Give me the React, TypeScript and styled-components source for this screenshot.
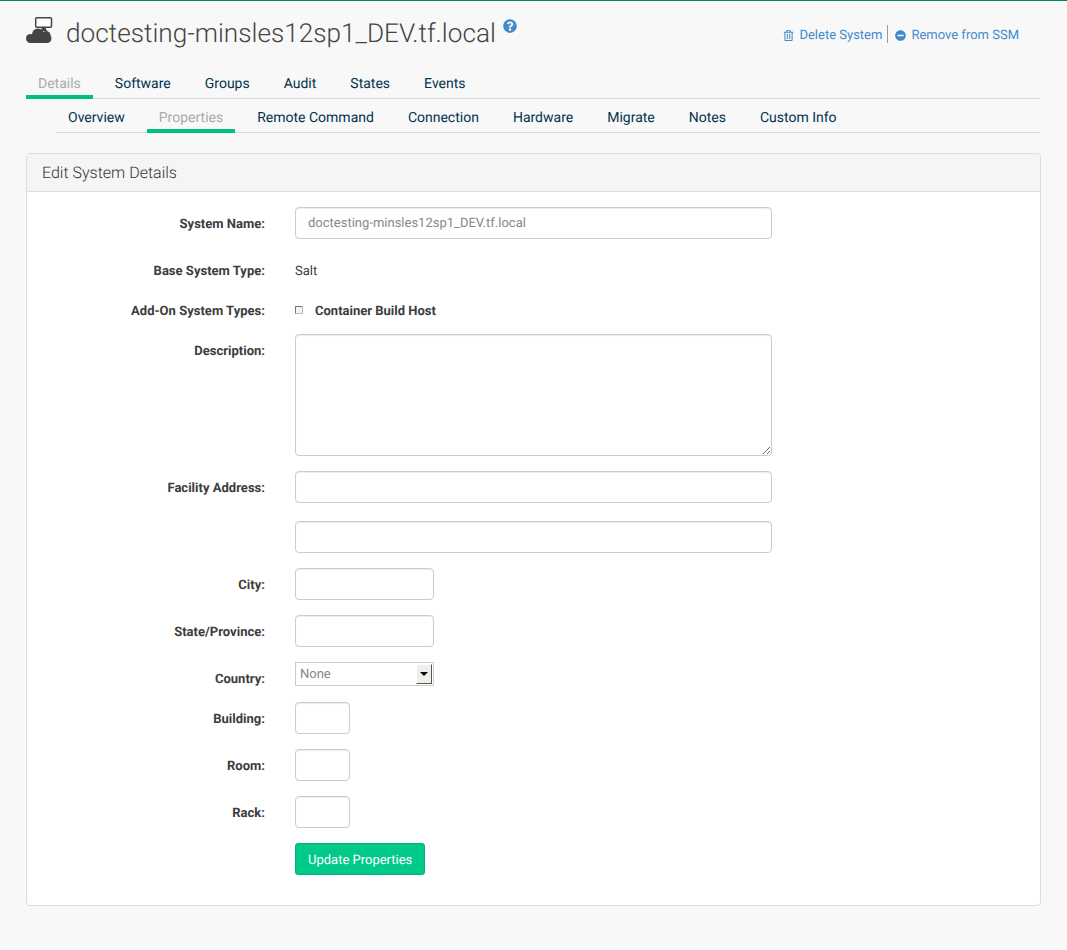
import React from "react";
import styled, { createGlobalStyle } from "styled-components";
import { FaMinusCircle, FaQuestionCircle, FaRegTrashAlt } from "react-icons/fa";

const Global = createGlobalStyle`
  html, body { margin: 0; padding: 0; background: #f8f8f8; }
  body { font-family: Roboto, "Liberation Sans", sans-serif; font-size: 13px; color: #333; text-rendering: geometricPrecision; }
  * { box-sizing: border-box; }
`;

const Page = styled.div`
  border-top: 1px solid #00875f;
  padding: 0 26px 43px;
  min-height: 950px;
`;

const Header = styled.header`
  display: flex;
  justify-content: space-between;
  align-items: flex-start;
  height: 64px;
  padding-top: 16px;
`;

const TitleGroup = styled.div`
  display: flex;
  align-items: flex-start;
`;

const Title = styled.h1`
  margin: 1px 0 0 12px;
  font-size: 26.2px;
  font-weight: 300;
  line-height: 32px;
  color: #444;
`;

const Help = styled.a`
  margin: 2px 0 0 7px;
  font-size: 14px;
  line-height: 14px;
  color: #428bca;
`;

const Actions = styled.div`
  display: flex;
  align-items: center;
  margin: 8px 22px 0 0;
  font-size: 13px;
  color: #428bca;
`;

const Action = styled.a`
  display: flex;
  align-items: center;
  gap: 5px;
  height: 18px;
  padding-top: 2px;
  & svg { font-size: 11px; }
`;

const Sep = styled.span`
  width: 1px;
  height: 18px;
  margin: 0 7px 0 5px;
  background: #999;
`;

const TabBar = styled.nav<{ $sub?: boolean }>`
  display: flex;
  gap: 10px;
  height: 34px;
  margin-left: ${(p) => (p.$sub ? "30px" : "0")};
  border-bottom: 1px solid #ddd;
`;

const Tab = styled.a<{ $active?: boolean }>`
  display: block;
  height: 34px;
  padding: 3px 12px 0;
  font-size: 14px;
  line-height: 32px;
  color: ${(p) => (p.$active ? "#aaa" : "#00334e")};
  border-bottom: ${(p) => (p.$active ? "4px solid #00c081" : "none")};
`;

const Panel = styled.section`
  margin-top: 20px;
  background: #fff;
  border: 1px solid #ddd;
  border-radius: 4px;
`;

const PanelHead = styled.h2`
  margin: 0;
  height: 38px;
  padding: 0 15px;
  background: #f5f5f5;
  border-bottom: 1px solid #ddd;
  border-radius: 3px 3px 0 0;
  font-size: 16px;
  font-weight: 300;
  line-height: 37px;
  color: #333;
`;

const Form = styled.form`
  padding: 15px 0 30px;
`;

const Row = styled.div<{ $mb?: number }>`
  display: grid;
  grid-template-columns: 238px 1fr;
  column-gap: 30px;
  margin-bottom: ${(p) => p.$mb ?? 15}px;
  &:last-child { margin-bottom: 0; }
`;

const Label = styled.label`
  padding-top: 8px;
  font-size: 13px;
  font-weight: 700;
  line-height: 20px;
  letter-spacing: 0.02px;
  text-align: right;
  color: #3c3c3c;
`;

const Input = styled.input<{ $w: number }>`
  display: block;
  width: ${(p) => p.$w}px;
  height: 32px;
  padding: 0 12px;
  background: #fff;
  border: 1px solid #ccc;
  border-radius: 4px;
  box-shadow: inset 0 1px 1px rgba(0, 0, 0, 0.075);
  font: 13px Roboto, sans-serif;
  text-rendering: geometricPrecision;
  color: #888;
`;

const TextArea = styled.textarea`
  display: block;
  width: 477px;
  height: 122px;
  background: #fff;
  border: 1px solid #ccc;
  border-radius: 4px;
  box-shadow: inset 0 1px 1px rgba(0, 0, 0, 0.075);
`;

const Static = styled.div`
  height: 32px;
  padding-top: 8px;
  font-size: 13px;
  line-height: 20px;
  color: #3c3c3c;
`;

const CheckGroup = styled.div`
  display: flex;
  align-items: flex-start;
  height: 28px;
  padding-top: 8px;
`;

const Check = styled.input`
  appearance: none;
  width: 8px;
  height: 8px;
  margin: 4px 12px 0 0;
  background: #f2f2f2;
  border: 1px solid;
  border-color: #777 #bbb #bbb #777;
`;

const CheckLabel = styled.label`
  font-size: 13px;
  font-weight: 700;
  line-height: 20px;
  color: #3c3c3c;
`;

const SelectBox = styled.div`
  display: flex;
  align-items: center;
  justify-content: space-between;
  width: 139px;
  height: 24px;
  padding: 0 1px 0 4px;
  background: #fff;
  border: 1px solid #ccc;
  font-size: 13px;
  color: #888;
`;

const SelectValue = styled.span`
  padding-top: 1px;
`;

const SelectArrow = styled.span`
  display: flex;
  align-items: center;
  justify-content: center;
  width: 16px;
  height: 20px;
  background: #eeeeea;
  border: 1px solid;
  border-color: #fff #555 #555 #fff;
  &::after {
    content: "";
    border-top: 4px solid #000;
    border-left: 4px solid transparent;
    border-right: 4px solid transparent;
  }
`;

const Submit = styled.button`
  display: block;
  height: 32px;
  padding: 2px 12px 0;
  background: #00c98a;
  border: 1px solid #00b57c;
  border-radius: 3px;
  font: 13px Roboto, sans-serif;
  text-rendering: geometricPrecision;
  color: #fff;
`;

const SystemIcon = () => (
  <svg width="28" height="28" viewBox="0 0 28 28">
    <rect x="9.7" y="0.8" width="15.8" height="9.4" rx="1" fill="#fff" stroke="#444" strokeWidth="1.5" />
    <path d="M15.5 10.500h4.500v2l1.500 1.500h-7.500l1.500-1.500z" fill="#444" />
    <g fill="#444">
      <circle cx="4.500" cy="21.500" r="4.500" />
      <circle cx="12" cy="17.500" r="6" />
      <circle cx="20" cy="18.500" r="4.500" />
      <circle cx="21" cy="21.500" r="4.500" />
      <rect x="4.500" y="19" width="16.500" height="7" />
    </g>
  </svg>
);

export default function App() {
  return (
    <Page>
      <Global />
      <Header>
        <TitleGroup>
          <SystemIcon />
          <Title>doctesting-minsles12sp1_DEV.tf.local</Title>
          <Help><FaQuestionCircle /></Help>
        </TitleGroup>
        <Actions>
          <Action><FaRegTrashAlt />Delete System</Action>
          <Sep />
          <Action><FaMinusCircle />Remove from SSM</Action>
        </Actions>
      </Header>
      <TabBar>
        <Tab $active>Details</Tab>
        <Tab>Software</Tab>
        <Tab>Groups</Tab>
        <Tab>Audit</Tab>
        <Tab>States</Tab>
        <Tab>Events</Tab>
      </TabBar>
      <TabBar $sub>
        <Tab>Overview</Tab>
        <Tab $active>Properties</Tab>
        <Tab>Remote Command</Tab>
        <Tab>Connection</Tab>
        <Tab>Hardware</Tab>
        <Tab>Migrate</Tab>
        <Tab>Notes</Tab>
        <Tab>Custom Info</Tab>
      </TabBar>
      <Panel>
        <PanelHead>Edit System Details</PanelHead>
        <Form>
          <Row>
            <Label>System Name:</Label>
            <Input $w={477} defaultValue="doctesting-minsles12sp1_DEV.tf.local" />
          </Row>
          <Row $mb={8}>
            <Label>Base System Type:</Label>
            <Static>Salt</Static>
          </Row>
          <Row $mb={12}>
            <Label>Add-On System Types:</Label>
            <CheckGroup>
              <Check type="checkbox" />
              <CheckLabel>Container Build Host</CheckLabel>
            </CheckGroup>
          </Row>
          <Row>
            <Label>Description:</Label>
            <TextArea />
          </Row>
          <Row $mb={18}>
            <Label>Facility Address:</Label>
            <Input $w={477} />
          </Row>
          <Row>
            <Label />
            <Input $w={477} />
          </Row>
          <Row>
            <Label>City:</Label>
            <Input $w={139} />
          </Row>
          <Row>
            <Label>State/Province:</Label>
            <Input $w={139} />
          </Row>
          <Row $mb={12}>
            <Label>Country:</Label>
            <SelectBox><SelectValue>None</SelectValue><SelectArrow /></SelectBox>
          </Row>
          <Row>
            <Label>Building:</Label>
            <Input $w={55} />
          </Row>
          <Row>
            <Label>Room:</Label>
            <Input $w={55} />
          </Row>
          <Row>
            <Label>Rack:</Label>
            <Input $w={55} />
          </Row>
          <Row>
            <Label />
            <div><Submit type="button">Update Properties</Submit></div>
          </Row>
        </Form>
      </Panel>
    </Page>
  );
}
